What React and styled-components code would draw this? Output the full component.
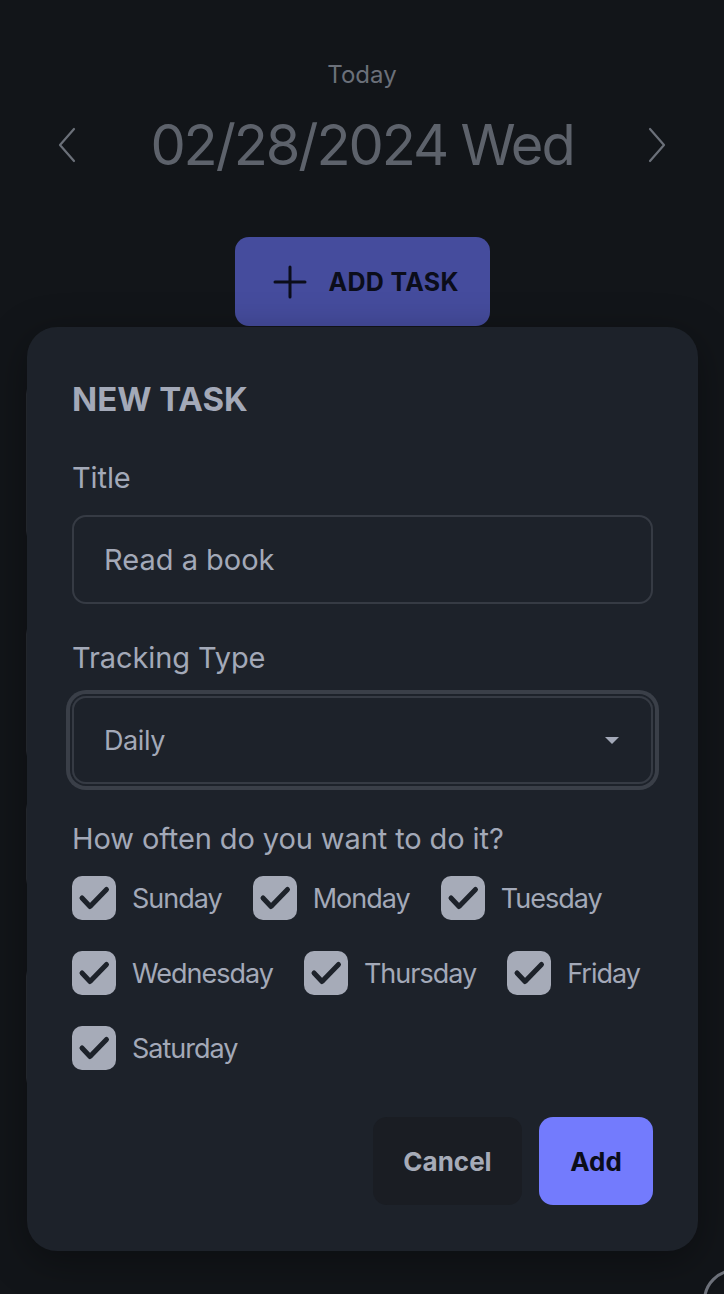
import React, { useState } from 'react';
import styled, { createGlobalStyle } from 'styled-components';

// ============================================
// THEME VALUES
// ============================================

const colors = {
  page: '#121519',
  modal: '#1d222a',
  text: '#a3a9b8',
  dim: '#6b7079',
  date: '#5d626b',
  border: '#363b44',
  ring: '#3a3f48',
  accent: '#737bfd',
  accentDim: '#454c9d',
  ink: '#0b0d1a',
  cancel: '#1a1d23',
};

const GlobalStyle = createGlobalStyle`
  html, body {
    margin: 0;
    padding: 0;
    background: ${colors.page};
    font-family: Inter, "Noto Sans", "Liberation Sans", sans-serif;
  }
  * { box-sizing: border-box; }
`;

// ============================================
// PAGE
// ============================================

const Page = styled.div`
  position: relative;
  width: 724px;
  height: 1294px;
  overflow: hidden;
  padding-top: 60px;
  background: ${colors.page};
`;

const TodayLabel = styled.div`
  text-align: center;
  font-size: 24px;
  line-height: 30px;
  color: ${colors.dim};
`;

const DateRow = styled.div`
  display: flex;
  align-items: center;
  justify-content: space-between;
  padding: 0 56px;
  height: 70px;
  margin-top: 20px;
`;

const DateText = styled.div`
  font-size: 56px;
  line-height: 70px;
  color: ${colors.date};
  letter-spacing: -2.1px;
`;

const ChevronBtn = styled.button`
  background: none;
  border: none;
  padding: 0;
  width: 22px;
  height: 36px;
  display: flex;
  align-items: center;
  justify-content: center;
  color: ${colors.dim};
`;

const AddTaskButton = styled.button`
  display: flex;
  align-items: center;
  gap: 22px;
  margin: 57px auto 0;
  width: 255px;
  height: 89px;
  padding: 0 0 0 38px;
  border: none;
  border-radius: 14px;
  background: ${colors.accentDim};
  color: ${colors.ink};
  font-family: inherit;
  font-size: 25px;
  font-weight: 700;
  letter-spacing: 0.3px;
`;

const TaskList = styled.div`
  display: flex;
  flex-direction: column;
  margin: 0 26px;
`;

const TaskCard = styled.div`
  height: ${(p) => p.$h}px;
  margin-top: ${(p) => p.$gap}px;
  border: 1px solid #2a2e36;
  border-radius: 14px;
`;

// ============================================
// MODAL
// ============================================

const Modal = styled.div`
  position: absolute;
  top: 327px;
  left: 27px;
  width: 671px;
  background: ${colors.modal};
  border-radius: 30px;
  padding: 52px 45px 46px;
  display: flex;
  flex-direction: column;
  box-shadow: 0 10px 40px rgba(0, 0, 0, 0.35);
`;

const ModalTitle = styled.h2`
  margin: 0;
  font-size: 33px;
  line-height: 40px;
  font-weight: 700;
  color: ${colors.text};
`;

const FieldLabel = styled.div`
  font-size: 29px;
  line-height: 40px;
  color: ${colors.text};
  letter-spacing: -0.1px;
  margin-top: ${(p) => p.$top}px;
  margin-bottom: 17px;
`;

const TextInput = styled.div`
  height: 89px;
  border: 2px solid ${colors.border};
  border-radius: 14px;
  display: flex;
  align-items: center;
  padding: 0 30px;
  font-size: 29px;
  color: ${colors.text};
`;

const SelectBox = styled.div`
  height: 88px;
  margin-top: 1px;
  border: 2px solid ${colors.border};
  border-radius: 14px;
  display: flex;
  align-items: center;
  justify-content: space-between;
  padding: 0 32px 0 30px;
  font-size: 27px;
  letter-spacing: -0.4px;
  color: ${colors.text};
  box-shadow: 0 0 0 2px ${colors.modal}, 0 0 0 6px ${colors.ring};
`;

const Caret = styled.span`
  width: 0;
  height: 0;
  border-left: 7px solid transparent;
  border-right: 7px solid transparent;
  border-top: 7px solid ${colors.text};
`;

const DayGrid = styled.div`
  display: flex;
  flex-wrap: wrap;
  column-gap: 31px;
  row-gap: 31px;
`;

const DayItem = styled.label`
  display: flex;
  align-items: center;
  gap: 16px;
  font-size: 27px;
  letter-spacing: -1px;
  color: ${colors.text};
`;

const CheckBox = styled.span`
  width: 44px;
  height: 44px;
  border-radius: 10px;
  background: #a6abb8;
  display: flex;
  align-items: center;
  justify-content: center;
`;

const Actions = styled.div`
  display: flex;
  justify-content: flex-end;
  gap: 17px;
  margin-top: 47px;
`;

const ActionButton = styled.button`
  height: 88px;
  width: ${(p) => p.$w}px;
  border: none;
  border-radius: 14px;
  font-family: inherit;
  font-size: 26px;
  font-weight: 700;
  background: ${(p) => (p.$primary ? colors.accent : colors.cancel)};
  color: ${(p) => (p.$primary ? colors.ink : '#a6abb8')};
`;

const Fab = styled.div`
  position: absolute;
  left: 703px;
  top: 1269px;
  width: 64px;
  height: 64px;
  border-radius: 50%;
  border: 3px solid #6c7079;
`;

// ============================================
// ICONS
// ============================================

const Chevron = ({ dir }) => (
  <svg width="20" height="36" viewBox="0 0 20 36" fill="none">
    <path
      d={dir === 'left' ? 'M17 2 L3 18 L17 34' : 'M3 2 L17 18 L3 34'}
      stroke="currentColor"
      strokeWidth="2.2"
      strokeLinecap="round"
      strokeLinejoin="round"
    />
  </svg>
);

const PlusIcon = () => (
  <svg width="34" height="34" viewBox="0 0 34 34" fill="none">
    <path d="M17 2 V32 M2 17 H32" stroke={colors.ink} strokeWidth="3" strokeLinecap="round" />
  </svg>
);

const CheckMark = () => (
  <svg width="44" height="44" viewBox="0 0 44 44" fill="none">
    <path d="M10 22 L18 30.5 L34.5 13.5" stroke="#1d222a" strokeWidth="5" strokeLinecap="round" strokeLinejoin="round" />
  </svg>
);

// ============================================
// COMPONENT
// ============================================

const DAYS = ['Sunday', 'Monday', 'Tuesday', 'Wednesday', 'Thursday', 'Friday', 'Saturday'];

// cards of the task list that sit behind the dialog
const CARDS = [
  { h: 165, gap: 54 },
  { h: 145, gap: 75 },
  { h: 98, gap: 30 },
  { h: 130, gap: 69 },
];

function App() {
  const [checked] = useState(DAYS);

  return (
    <Page>
      <GlobalStyle />
      <TodayLabel>Today</TodayLabel>
      <DateRow>
        <ChevronBtn><Chevron dir="left" /></ChevronBtn>
        <DateText>02/28/2024 Wed</DateText>
        <ChevronBtn><Chevron dir="right" /></ChevronBtn>
      </DateRow>

      <AddTaskButton>
        <PlusIcon />
        ADD TASK
      </AddTaskButton>

      <TaskList>
        {CARDS.map((c, i) => (
          <TaskCard key={i} $h={c.h} $gap={c.gap} />
        ))}
      </TaskList>

      <Modal>
        <ModalTitle>NEW TASK</ModalTitle>

        <FieldLabel $top={39}>Title</FieldLabel>
        <TextInput>Read a book</TextInput>

        <FieldLabel $top={34}>Tracking Type</FieldLabel>
        <SelectBox>
          Daily
          <Caret />
        </SelectBox>

        <FieldLabel $top={35}>How often do you want to do it?</FieldLabel>
        <DayGrid>
          {DAYS.map((day) => (
            <DayItem key={day}>
              <CheckBox>{checked.includes(day) && <CheckMark />}</CheckBox>
              {day}
            </DayItem>
          ))}
        </DayGrid>

        <Actions>
          <ActionButton $w={149}>Cancel</ActionButton>
          <ActionButton $w={114} $primary>Add</ActionButton>
        </Actions>
      </Modal>

      <Fab />
    </Page>
  );
}

export default App;
